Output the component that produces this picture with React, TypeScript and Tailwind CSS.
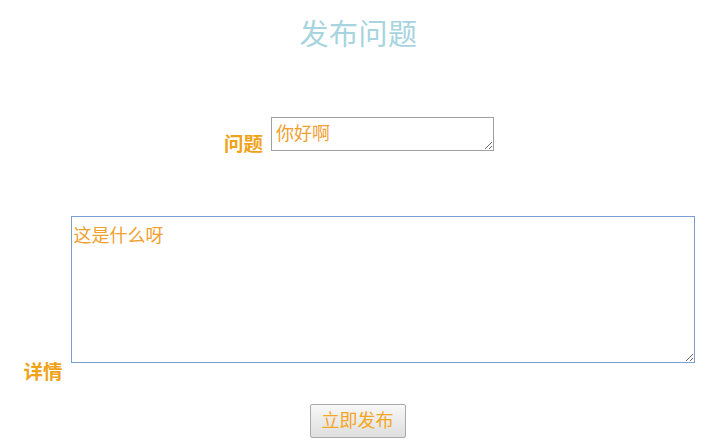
import React from 'react'

const font = { fontFamily: '"Liberation Sans", "Noto Sans CJK SC", sans-serif' }

export default function App() {
  return (
    <div className="min-h-screen bg-white pl-2 text-[#f5a623]" style={font}>
      <h1 className="pt-[17px] text-center text-[29px] font-normal leading-[36px] tracking-[0.5px] text-[#a8d4e0]">
        发布问题
      </h1>

      <div className="mt-[64px] flex items-end justify-center gap-2 pl-[1px]">
        <label className="mb-[-3px] text-[19.5px] font-bold leading-[20px] text-[#f0a218]">问题</label>
        <textarea
          defaultValue="你好啊"
          className="h-[34px] w-[223px] resize border border-[#a0a0a0] bg-white px-[4px] pt-[4px] pb-0 text-[18px] leading-[24px] text-[#f0a030] outline-none"
        />
      </div>

      <div className="mt-[65px] flex items-end justify-center gap-2 pl-[1px]">
        <label className="mb-[-19px] text-[19.5px] font-bold leading-[20px] text-[#f0a218]">详情</label>
        <textarea
          autoFocus
          defaultValue="这是什么呀"
          className="h-[147px] w-[624px] resize border border-[#7b9ed6] bg-white px-[2px] py-[7px] text-[18px] leading-[24px] text-[#f0a030] caret-[#f0a030] outline-none"
        />
      </div>

      <div className="mt-[41px] flex justify-center pr-[2px]">
        <button className="h-[34px] w-[96px] rounded-[2px] border border-[#a9a9a9] bg-gradient-to-b from-[#f8f8f8] to-[#dedede] text-[18px] leading-[24px] text-[#f5a623]">
          立即发布
        </button>
      </div>
    </div>
  )
}
